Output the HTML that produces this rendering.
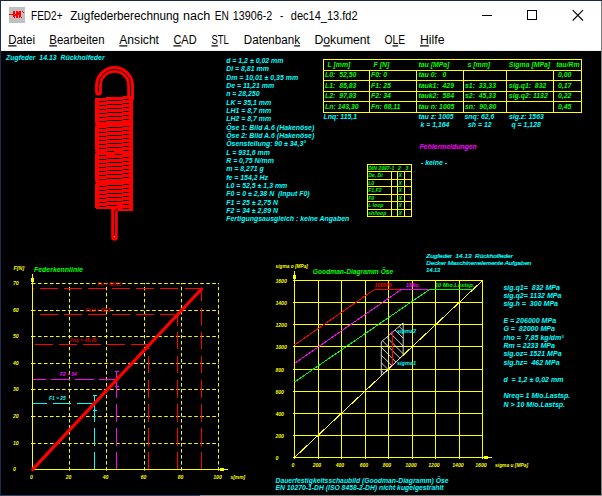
<!DOCTYPE html>
<html lang="de"><head><meta charset="utf-8"><title>FED2+  Zugfederberechnung nach EN 13906-2</title>
<style>
html,body{margin:0;padding:0;background:#000;overflow:hidden}
svg{display:block}
text{font-family:"Liberation Sans",sans-serif;white-space:pre}
.bi{font-weight:bold;font-style:italic}
.ui{font-weight:normal;font-style:normal}
.ri{font-weight:normal;font-style:italic;stroke:#00ffff;stroke-width:.22px}
</style></head><body>
<svg width="602" height="496" viewBox="0 0 602 496">
<rect x="0" y="0" width="602" height="496" fill="#000"/>
<rect x="1" y="1" width="600" height="49" fill="#fff"/>
<rect x="1" y="50" width="600" height="1" fill="#f0f0f0"/>
<rect x="0" y="0" width="602" height="1" fill="#1b2740"/>
<rect x="0" y="0" width="1" height="496" fill="#1c2c52"/>
<rect x="601" y="1" width="1" height="495" fill="#7f7f7f"/>
<rect x="0" y="495" width="200" height="1" fill="#2a4172"/>
<rect x="200" y="495" width="402" height="1" fill="#8c8c8c"/>
<rect x="9" y="7" width="16" height="16" fill="#c0c0c0"/>
<g fill="#ff0000" shape-rendering="crispEdges">
<rect x="9" y="14" width="4" height="1" fill="#ff0000"/>
<rect x="13" y="11" width="1" height="6" fill="#ff0000"/>
<rect x="14" y="11" width="1" height="7" fill="#ff0000"/>
<rect x="15" y="14" width="1" height="2" fill="#ff0000"/>
<rect x="16" y="11" width="2" height="7" fill="#ff0000"/>
<rect x="18" y="12" width="1" height="3" fill="#ff0000"/>
<rect x="19" y="11" width="1" height="7" fill="#ff0000"/>
<rect x="20" y="11" width="1" height="6" fill="#ff0000"/>
<rect x="21" y="17" width="1" height="1" fill="#ff0000"/>
<rect x="22" y="11" width="1" height="1" fill="#ff0000"/>
<rect x="23" y="12" width="1" height="1" fill="#ff0000"/>
</g>
<text class="ui" x="31.1" y="19.5" font-size="12" fill="#000" textLength="31.4" lengthAdjust="spacingAndGlyphs">FED2+</text>
<text class="ui" x="70.2" y="19.5" font-size="12" fill="#000" textLength="108.8" lengthAdjust="spacingAndGlyphs">Zugfederberechnung</text>
<text class="ui" x="183" y="19.5" font-size="12" fill="#000" textLength="27.3" lengthAdjust="spacingAndGlyphs">nach</text>
<text class="ui" x="214.8" y="19.5" font-size="12" fill="#000" textLength="14.1" lengthAdjust="spacingAndGlyphs">EN</text>
<text class="ui" x="232.8" y="19.5" font-size="12" fill="#000" textLength="39.4" lengthAdjust="spacingAndGlyphs">13906-2</text>
<text class="ui" x="280" y="19.5" font-size="12" fill="#000" textLength="3.3" lengthAdjust="spacingAndGlyphs">-</text>
<text class="ui" x="290.8" y="19.5" font-size="12" fill="#000" textLength="66.7" lengthAdjust="spacingAndGlyphs">dec14_13.fd2</text>
<line x1="482" y1="15.5" x2="492" y2="15.5" stroke="#000" stroke-width="1" shape-rendering="crispEdges"/>
<rect x="527.5" y="10.5" width="9" height="9" fill="none" stroke="#000" stroke-width="1" shape-rendering="crispEdges"/>
<path d="M572.7 10.2L583 20.5M583 10.2L572.7 20.5" stroke="#000" stroke-width="1.1" fill="none"/>
<text class="ui" x="8.2" y="44.3" font-size="12" fill="#000" textLength="26.8" lengthAdjust="spacingAndGlyphs"><tspan style="text-decoration:underline;text-underline-offset:1.6px;text-decoration-thickness:1px">D</tspan>atei</text>
<text class="ui" x="49.3" y="44.3" font-size="12" fill="#000" textLength="55.3" lengthAdjust="spacingAndGlyphs"><tspan style="text-decoration:underline;text-underline-offset:1.6px;text-decoration-thickness:1px">B</tspan>earbeiten</text>
<text class="ui" x="119.3" y="44.3" font-size="12" fill="#000" textLength="39.7" lengthAdjust="spacingAndGlyphs"><tspan style="text-decoration:underline;text-underline-offset:1.6px;text-decoration-thickness:1px">A</tspan>nsicht</text>
<text class="ui" x="173.4" y="44.3" font-size="12" fill="#000" textLength="23.2" lengthAdjust="spacingAndGlyphs"><tspan style="text-decoration:underline;text-underline-offset:1.6px;text-decoration-thickness:1px">C</tspan>AD</text>
<text class="ui" x="211.5" y="44.3" font-size="12" fill="#000" textLength="17.4" lengthAdjust="spacingAndGlyphs"><tspan style="text-decoration:underline;text-underline-offset:1.6px;text-decoration-thickness:1px">S</tspan>TL</text>
<text class="ui" x="243.8" y="44.3" font-size="12" fill="#000" textLength="56.2" lengthAdjust="spacingAndGlyphs">Datenban<tspan style="text-decoration:underline;text-underline-offset:1.6px;text-decoration-thickness:1px">k</tspan></text>
<text class="ui" x="314.5" y="44.3" font-size="12" fill="#000" textLength="55.5" lengthAdjust="spacingAndGlyphs">D<tspan style="text-decoration:underline;text-underline-offset:1.6px;text-decoration-thickness:1px">o</tspan>kument</text>
<text class="ui" x="384.5" y="44.3" font-size="12" fill="#000" textLength="20.5" lengthAdjust="spacingAndGlyphs">O<tspan style="text-decoration:underline;text-underline-offset:1.6px;text-decoration-thickness:1px">L</tspan>E</text>
<text class="ui" x="420" y="44.3" font-size="12" fill="#000" textLength="24.5" lengthAdjust="spacingAndGlyphs"><tspan style="text-decoration:underline;text-underline-offset:1.6px;text-decoration-thickness:1px">H</tspan>ilfe</text>
<text class="bi" x="6" y="59.6" font-size="6.4" fill="#00ffff" textLength="98.6" lengthAdjust="spacingAndGlyphs">Zugfeder  14.13  Rückholfeder</text>
<g id="spring">
<path d="M98.5 92.2V85.4A16.05 16.05 0 0 1 130.6 85.4V98" fill="none" stroke="#ff0000" stroke-width="6.8" stroke-linecap="round"/>
<path d="M98.5 92.2V85.4A16.05 16.05 0 0 1 130.6 85.4V96" fill="none" stroke="#000" stroke-width="1" stroke-linecap="butt"/>
<path d="M95 98.2H106V96.7H122.5V96H133.2V210L132 211.3H118V209.3H96.5L95 208Z" fill="#ff0000" shape-rendering="crispEdges"/>
<path d="M114.5 206V237.4" fill="none" stroke="#ff0000" stroke-width="6.6" stroke-linecap="round"/>
<g fill="#000" shape-rendering="crispEdges">
<rect x="99" y="101" width="7" height="1" fill="#000"/>
<rect x="99" y="105" width="7" height="1" fill="#000"/>
<rect x="99" y="109" width="7" height="1" fill="#000"/>
<rect x="99" y="113" width="7" height="1" fill="#000"/>
<rect x="99" y="117" width="7" height="1" fill="#000"/>
<rect x="99" y="121" width="7" height="1" fill="#000"/>
<rect x="99" y="128" width="7" height="1" fill="#000"/>
<rect x="99" y="132" width="7" height="1" fill="#000"/>
<rect x="99" y="136" width="7" height="1" fill="#000"/>
<rect x="99" y="140" width="7" height="1" fill="#000"/>
<rect x="99" y="144" width="7" height="1" fill="#000"/>
<rect x="99" y="148" width="7" height="1" fill="#000"/>
<rect x="99" y="155" width="7" height="1" fill="#000"/>
<rect x="99" y="159" width="7" height="1" fill="#000"/>
<rect x="99" y="163" width="7" height="1" fill="#000"/>
<rect x="99" y="167" width="7" height="1" fill="#000"/>
<rect x="99" y="171" width="7" height="1" fill="#000"/>
<rect x="99" y="175" width="7" height="1" fill="#000"/>
<rect x="99" y="179" width="7" height="1" fill="#000"/>
<rect x="99" y="186" width="7" height="1" fill="#000"/>
<rect x="99" y="190" width="7" height="1" fill="#000"/>
<rect x="99" y="194" width="7" height="1" fill="#000"/>
<rect x="99" y="198" width="7" height="1" fill="#000"/>
<rect x="99" y="202" width="7" height="1" fill="#000"/>
<rect x="99" y="206" width="7" height="1" fill="#000"/>
<rect x="107" y="100" width="15" height="1" fill="#000"/>
<rect x="107" y="104" width="15" height="1" fill="#000"/>
<rect x="107" y="108" width="15" height="1" fill="#000"/>
<rect x="107" y="112" width="15" height="1" fill="#000"/>
<rect x="107" y="116" width="15" height="1" fill="#000"/>
<rect x="107" y="120" width="15" height="1" fill="#000"/>
<rect x="107" y="127" width="15" height="1" fill="#000"/>
<rect x="107" y="131" width="15" height="1" fill="#000"/>
<rect x="107" y="135" width="15" height="1" fill="#000"/>
<rect x="107" y="139" width="15" height="1" fill="#000"/>
<rect x="107" y="143" width="15" height="1" fill="#000"/>
<rect x="107" y="147" width="15" height="1" fill="#000"/>
<rect x="107" y="158" width="15" height="1" fill="#000"/>
<rect x="107" y="162" width="15" height="1" fill="#000"/>
<rect x="107" y="166" width="15" height="1" fill="#000"/>
<rect x="107" y="170" width="15" height="1" fill="#000"/>
<rect x="107" y="174" width="15" height="1" fill="#000"/>
<rect x="107" y="178" width="15" height="1" fill="#000"/>
<rect x="107" y="185" width="15" height="1" fill="#000"/>
<rect x="107" y="189" width="15" height="1" fill="#000"/>
<rect x="107" y="193" width="15" height="1" fill="#000"/>
<rect x="107" y="197" width="15" height="1" fill="#000"/>
<rect x="107" y="201" width="15" height="1" fill="#000"/>
<rect x="107" y="151" width="7" height="1" fill="#000"/>
<rect x="115" y="154" width="7" height="1" fill="#000"/>
<rect x="107" y="205" width="10" height="1" fill="#000"/>
<rect x="123" y="99" width="6" height="1" fill="#000"/>
<rect x="123" y="103" width="6" height="1" fill="#000"/>
<rect x="123" y="107" width="6" height="1" fill="#000"/>
<rect x="123" y="111" width="6" height="1" fill="#000"/>
<rect x="123" y="115" width="6" height="1" fill="#000"/>
<rect x="123" y="119" width="6" height="1" fill="#000"/>
<rect x="123" y="126" width="6" height="1" fill="#000"/>
<rect x="123" y="130" width="6" height="1" fill="#000"/>
<rect x="123" y="134" width="6" height="1" fill="#000"/>
<rect x="123" y="138" width="6" height="1" fill="#000"/>
<rect x="123" y="142" width="6" height="1" fill="#000"/>
<rect x="123" y="146" width="6" height="1" fill="#000"/>
<rect x="123" y="150" width="6" height="1" fill="#000"/>
<rect x="123" y="157" width="6" height="1" fill="#000"/>
<rect x="123" y="161" width="6" height="1" fill="#000"/>
<rect x="123" y="165" width="6" height="1" fill="#000"/>
<rect x="123" y="169" width="6" height="1" fill="#000"/>
<rect x="123" y="173" width="6" height="1" fill="#000"/>
<rect x="123" y="177" width="6" height="1" fill="#000"/>
<rect x="123" y="184" width="6" height="1" fill="#000"/>
<rect x="123" y="188" width="6" height="1" fill="#000"/>
<rect x="123" y="192" width="6" height="1" fill="#000"/>
<rect x="123" y="196" width="6" height="1" fill="#000"/>
<rect x="123" y="200" width="6" height="1" fill="#000"/>
<rect x="123" y="204" width="6" height="1" fill="#000"/>
<rect x="123" y="208" width="6" height="1" fill="#000"/>
<rect x="114" y="211" width="1" height="25" fill="#000"/>
<rect x="94" y="150" width="2" height="1" fill="#000"/>
<rect x="94" y="152" width="2" height="1" fill="#000"/>
<rect x="94" y="123" width="2" height="1" fill="#000"/>
<rect x="94" y="125" width="2" height="1" fill="#000"/>
<rect x="94" y="181" width="2" height="1" fill="#000"/>
<rect x="94" y="183" width="2" height="1" fill="#000"/>
</g>
<path d="M114.5 211.6L117.4 208.8" stroke="#000" stroke-width="1" fill="none"/>
<rect x="114" y="236" width="1" height="1" fill="#ffff00"/>
</g>
<text class="bi" x="226.2" y="62.8" font-size="6.95" fill="#00ffff">d = 1,2 ± 0,02 mm</text>
<text class="bi" x="226.2" y="71.15" font-size="6.95" fill="#00ffff">Di = 8,81 mm</text>
<text class="bi" x="226.2" y="79.5" font-size="6.95" fill="#00ffff">Dm = 10,01 ± 0,35 mm</text>
<text class="bi" x="226.2" y="87.85" font-size="6.95" fill="#00ffff">De = 11,21 mm</text>
<text class="bi" x="226.2" y="96.2" font-size="6.95" fill="#00ffff">n = 28,250</text>
<text class="bi" x="226.2" y="104.55" font-size="6.95" fill="#00ffff">LK = 35,1 mm</text>
<text class="bi" x="226.2" y="112.9" font-size="6.95" fill="#00ffff">LH1 = 8,7 mm</text>
<text class="bi" x="226.2" y="121.25" font-size="6.95" fill="#00ffff">LH2 = 8,7 mm</text>
<text class="bi" x="226.2" y="129.6" font-size="6.95" fill="#00ffff">Öse 1: Bild A.6 (Hakenöse)</text>
<text class="bi" x="226.2" y="137.95" font-size="6.95" fill="#00ffff">Öse 2: Bild A.6 (Hakenöse)</text>
<text class="bi" x="226.2" y="146.3" font-size="6.95" fill="#00ffff">Ösenstellung: 90 ± 34,3°</text>
<text class="bi" x="226.2" y="154.65" font-size="6.95" fill="#00ffff">L = 931,6 mm</text>
<text class="bi" x="226.2" y="163.0" font-size="6.95" fill="#00ffff">R = 0,75 N/mm</text>
<text class="bi" x="226.2" y="171.35" font-size="6.95" fill="#00ffff">m = 8,271 g</text>
<text class="bi" x="226.2" y="179.7" font-size="6.95" fill="#00ffff">fe = 154,2 Hz</text>
<text class="bi" x="226.2" y="188.05" font-size="6.95" fill="#00ffff">L0 = 52,5 ± 1,3 mm</text>
<text class="bi" x="226.2" y="196.4" font-size="6.95" fill="#00ffff">F0 = 0 ± 2,38 N  (Input F0)</text>
<text class="bi" x="226.2" y="204.75" font-size="6.95" fill="#00ffff">F1 = 25 ± 2,75 N</text>
<text class="bi" x="226.2" y="213.1" font-size="6.95" fill="#00ffff">F2 = 34 ± 2,89 N</text>
<text class="bi" x="226.2" y="221.45" font-size="6.95" fill="#00ffff">Fertigungsausgleich : keine Angaben</text>
<line x1="323.0" y1="59.5" x2="582.0" y2="59.5" stroke="#ffff00" stroke-width="1" shape-rendering="crispEdges"/>
<line x1="323.0" y1="70.5" x2="582.0" y2="70.5" stroke="#ffff00" stroke-width="1" shape-rendering="crispEdges"/>
<line x1="323.0" y1="80.5" x2="582.0" y2="80.5" stroke="#ffff00" stroke-width="1" shape-rendering="crispEdges"/>
<line x1="323.0" y1="91.5" x2="582.0" y2="91.5" stroke="#ffff00" stroke-width="1" shape-rendering="crispEdges"/>
<line x1="323.0" y1="101.5" x2="582.0" y2="101.5" stroke="#ffff00" stroke-width="1" shape-rendering="crispEdges"/>
<line x1="323.0" y1="112.5" x2="582.0" y2="112.5" stroke="#ffff00" stroke-width="1" shape-rendering="crispEdges"/>
<line x1="323.5" y1="59.5" x2="323.5" y2="112.5" stroke="#ffff00" stroke-width="1" shape-rendering="crispEdges"/>
<line x1="581.5" y1="59.5" x2="581.5" y2="112.5" stroke="#ffff00" stroke-width="1" shape-rendering="crispEdges"/>
<line x1="369.5" y1="70.5" x2="369.5" y2="112.5" stroke="#ffff00" stroke-width="1" shape-rendering="crispEdges"/>
<line x1="416.5" y1="70.5" x2="416.5" y2="112.5" stroke="#ffff00" stroke-width="1" shape-rendering="crispEdges"/>
<line x1="463.5" y1="70.5" x2="463.5" y2="112.5" stroke="#ffff00" stroke-width="1" shape-rendering="crispEdges"/>
<line x1="506.5" y1="70.5" x2="506.5" y2="112.5" stroke="#ffff00" stroke-width="1" shape-rendering="crispEdges"/>
<line x1="553.5" y1="70.5" x2="553.5" y2="112.5" stroke="#ffff00" stroke-width="1" shape-rendering="crispEdges"/>
<text class="bi" x="327.5" y="66.5" font-size="6.9" fill="#00ff00">L [mm]</text>
<text class="bi" x="373.6" y="66.5" font-size="6.9" fill="#00ff00">F [N]</text>
<text class="bi" x="418.4" y="66.5" font-size="6.9" fill="#00ff00">tau [MPa]</text>
<text class="bi" x="467.5" y="66.5" font-size="6.9" fill="#00ff00">s [mm]</text>
<text class="bi" x="508.8" y="66.5" font-size="6.9" fill="#00ff00">Sigma [MPa]</text>
<text class="bi" x="556.2" y="66.5" font-size="6.9" fill="#00ff00">tau/Rm</text>
<text class="bi" x="325" y="77" font-size="6.9" fill="#00ff00">L0:  52,50</text>
<text class="bi" x="371" y="77" font-size="6.9" fill="#00ff00">F0: 0</text>
<text class="bi" x="418.4" y="77" font-size="6.9" fill="#00ff00">tau 0:   0</text>
<text class="bi" x="558" y="77" font-size="6.9" fill="#00ff00">0,00</text>
<text class="bi" x="325" y="87.5" font-size="6.9" fill="#00ff00">L1:  85,83</text>
<text class="bi" x="371" y="87.5" font-size="6.9" fill="#00ff00">F1: 25</text>
<text class="bi" x="418.4" y="87.5" font-size="6.9" fill="#00ff00">tauk1:  429</text>
<text class="bi" x="465" y="87.5" font-size="6.9" fill="#00ff00">s1:  33,33</text>
<text class="bi" x="508.8" y="87.5" font-size="6.9" fill="#00ff00">sig.q1:  832</text>
<text class="bi" x="558" y="87.5" font-size="6.9" fill="#00ff00">0,17</text>
<text class="bi" x="325" y="98" font-size="6.9" fill="#00ff00">L2:  97,83</text>
<text class="bi" x="371" y="98" font-size="6.9" fill="#00ff00">F2: 34</text>
<text class="bi" x="418.4" y="98" font-size="6.9" fill="#00ff00">tauk2:  584</text>
<text class="bi" x="465" y="98" font-size="6.9" fill="#00ff00">s2:  45,33</text>
<text class="bi" x="508.8" y="98" font-size="6.9" fill="#00ff00">sig.q2: 1132</text>
<text class="bi" x="558" y="98" font-size="6.9" fill="#00ff00">0,22</text>
<text class="bi" x="325" y="108.5" font-size="6.9" fill="#00ff00">Ln: 143,30</text>
<text class="bi" x="371" y="108.5" font-size="6.9" fill="#00ff00">Fn: 68,11</text>
<text class="bi" x="418.4" y="108.5" font-size="6.9" fill="#00ff00">tau n: 1005</text>
<text class="bi" x="465" y="108.5" font-size="6.9" fill="#00ff00">sn:  90,80</text>
<text class="bi" x="558" y="108.5" font-size="6.9" fill="#00ff00">0,45</text>
<text class="bi" x="323.5" y="119.4" font-size="6.9" fill="#00ffff">Lnq: 115,1</text>
<text class="bi" x="418.4" y="119.4" font-size="6.9" fill="#00ffff">tau z: 1005</text>
<text class="bi" x="464.5" y="119.4" font-size="6.9" fill="#00ffff">snq: 62,6</text>
<text class="bi" x="509" y="119.4" font-size="6.9" fill="#00ffff">sig.z: 1563</text>
<text class="bi" x="420.5" y="126.8" font-size="6.9" fill="#00ffff">k = 1,164</text>
<text class="bi" x="468" y="126.8" font-size="6.9" fill="#00ffff">sh = 12</text>
<text class="bi" x="511.5" y="126.8" font-size="6.9" fill="#00ffff">q = 1,128</text>
<text class="bi" x="419.4" y="149.3" font-size="6.9" fill="#ff00ff">Fehlermeldungen</text>
<text class="bi" x="421" y="164.8" font-size="6.9" fill="#00ffff">- keine -</text>
<line x1="367.0" y1="164.5" x2="412.0" y2="164.5" stroke="#ffff00" stroke-width="1" shape-rendering="crispEdges"/>
<line x1="367.0" y1="171.5" x2="412.0" y2="171.5" stroke="#ffff00" stroke-width="1" shape-rendering="crispEdges"/>
<line x1="367.0" y1="179.5" x2="412.0" y2="179.5" stroke="#ffff00" stroke-width="1" shape-rendering="crispEdges"/>
<line x1="367.0" y1="186.5" x2="412.0" y2="186.5" stroke="#ffff00" stroke-width="1" shape-rendering="crispEdges"/>
<line x1="367.0" y1="194.5" x2="412.0" y2="194.5" stroke="#ffff00" stroke-width="1" shape-rendering="crispEdges"/>
<line x1="367.0" y1="201.5" x2="412.0" y2="201.5" stroke="#ffff00" stroke-width="1" shape-rendering="crispEdges"/>
<line x1="367.0" y1="209.5" x2="412.0" y2="209.5" stroke="#ffff00" stroke-width="1" shape-rendering="crispEdges"/>
<line x1="367.0" y1="216.5" x2="412.0" y2="216.5" stroke="#ffff00" stroke-width="1" shape-rendering="crispEdges"/>
<line x1="367.5" y1="164.5" x2="367.5" y2="216.5" stroke="#ffff00" stroke-width="1" shape-rendering="crispEdges"/>
<line x1="411.5" y1="164.5" x2="411.5" y2="216.5" stroke="#ffff00" stroke-width="1" shape-rendering="crispEdges"/>
<line x1="391.5" y1="171.5" x2="391.5" y2="216.5" stroke="#ffff00" stroke-width="1" shape-rendering="crispEdges"/>
<line x1="397.5" y1="171.5" x2="397.5" y2="216.5" stroke="#ffff00" stroke-width="1" shape-rendering="crispEdges"/>
<line x1="404.5" y1="171.5" x2="404.5" y2="216.5" stroke="#ffff00" stroke-width="1" shape-rendering="crispEdges"/>
<text class="bi" x="368.2" y="170" font-size="5.1" fill="#00ff00">DIN 2097-1</text>
<text class="bi" x="398.1" y="170" font-size="5.1" fill="#00ff00">2</text>
<text class="bi" x="405.6" y="170" font-size="5.1" fill="#00ff00">3</text>
<text class="bi" x="368.2" y="177.1" font-size="5.1" fill="#00ff00">De, Di</text>
<text class="bi" x="398.6" y="177.1" font-size="5.1" fill="#00ff00">X</text>
<text class="bi" x="368.2" y="185.1" font-size="5.1" fill="#00ff00">L0</text>
<text class="bi" x="398.6" y="185.1" font-size="5.1" fill="#00ff00">X</text>
<text class="bi" x="368.2" y="192.1" font-size="5.1" fill="#00ff00">F1,F2</text>
<text class="bi" x="398.6" y="192.1" font-size="5.1" fill="#00ff00">X</text>
<text class="bi" x="368.2" y="200.1" font-size="5.1" fill="#00ff00">F0</text>
<text class="bi" x="398.6" y="200.1" font-size="5.1" fill="#00ff00">X</text>
<text class="bi" x="368.2" y="207.1" font-size="5.1" fill="#00ff00">L loop</text>
<text class="bi" x="398.6" y="207.1" font-size="5.1" fill="#00ff00">X</text>
<text class="bi" x="368.2" y="215.1" font-size="5.1" fill="#00ff00">sh/loop</text>
<text class="bi" x="398.6" y="215.1" font-size="5.1" fill="#00ff00">X</text>
<text class="bi" x="13.6" y="270.3" font-size="5.3" fill="#ffff00">F[N]</text>
<text class="bi" x="34" y="272.1" font-size="6.94" fill="#00ff00">Federkennlinie</text>
<line x1="32" y1="443.5" x2="219" y2="443.5" stroke="#ffff00" stroke-width="1" stroke-dasharray="3.55 2.46" stroke-dashoffset="0"/>
<rect x="31" y="443.0" width="1" height="1" fill="#ffff00"/>
<line x1="32" y1="416.5" x2="219" y2="416.5" stroke="#ffff00" stroke-width="1" stroke-dasharray="3.55 2.46" stroke-dashoffset="0"/>
<rect x="31" y="416.0" width="1" height="1" fill="#ffff00"/>
<line x1="32" y1="389.5" x2="219" y2="389.5" stroke="#ffff00" stroke-width="1" stroke-dasharray="3.55 2.46" stroke-dashoffset="0"/>
<rect x="31" y="389.0" width="1" height="1" fill="#ffff00"/>
<line x1="32" y1="363.5" x2="219" y2="363.5" stroke="#ffff00" stroke-width="1" stroke-dasharray="3.55 2.46" stroke-dashoffset="0"/>
<rect x="31" y="363.0" width="1" height="1" fill="#ffff00"/>
<line x1="32" y1="336.5" x2="219" y2="336.5" stroke="#ffff00" stroke-width="1" stroke-dasharray="3.55 2.46" stroke-dashoffset="0"/>
<rect x="31" y="336.0" width="1" height="1" fill="#ffff00"/>
<line x1="32" y1="310.5" x2="219" y2="310.5" stroke="#ffff00" stroke-width="1" stroke-dasharray="3.55 2.46" stroke-dashoffset="0"/>
<rect x="31" y="310.0" width="1" height="1" fill="#ffff00"/>
<line x1="32" y1="283.5" x2="219" y2="283.5" stroke="#ffff00" stroke-width="1" stroke-dasharray="3.55 2.46" stroke-dashoffset="0"/>
<rect x="31" y="283.0" width="1" height="1" fill="#ffff00"/>
<line x1="69.5" y1="283" x2="69.5" y2="470.7" stroke="#ffff00" stroke-width="1" stroke-dasharray="3.55 2.46" stroke-dashoffset="2.21"/>
<line x1="106.5" y1="283" x2="106.5" y2="470.7" stroke="#ffff00" stroke-width="1" stroke-dasharray="3.55 2.46" stroke-dashoffset="2.21"/>
<line x1="144.5" y1="283" x2="144.5" y2="470.7" stroke="#ffff00" stroke-width="1" stroke-dasharray="3.55 2.46" stroke-dashoffset="2.21"/>
<line x1="181.5" y1="283" x2="181.5" y2="470.7" stroke="#ffff00" stroke-width="1" stroke-dasharray="3.55 2.46" stroke-dashoffset="2.21"/>
<line x1="218.5" y1="283" x2="218.5" y2="470.7" stroke="#ffff00" stroke-width="1" stroke-dasharray="3.55 2.46" stroke-dashoffset="2.21"/>
<line x1="32.5" y1="274" x2="32.5" y2="470" stroke="#ffff00" stroke-width="1" shape-rendering="crispEdges"/>
<line x1="32" y1="469.5" x2="228" y2="469.5" stroke="#ffff00" stroke-width="1" shape-rendering="crispEdges"/>
<rect x="31" y="278" width="3" height="4" fill="#ffff00"/>
<rect x="220" y="468" width="4" height="3" fill="#ffff00"/>
<text class="bi" x="12.9" y="470.8" font-size="5.1" fill="#ffff00">0</text>
<text class="bi" x="12.9" y="444.8" font-size="5.1" fill="#ffff00">10</text>
<text class="bi" x="12.9" y="417.8" font-size="5.1" fill="#ffff00">20</text>
<text class="bi" x="12.9" y="390.8" font-size="5.1" fill="#ffff00">30</text>
<text class="bi" x="12.9" y="364.8" font-size="5.1" fill="#ffff00">40</text>
<text class="bi" x="12.9" y="337.8" font-size="5.1" fill="#ffff00">50</text>
<text class="bi" x="12.9" y="311.8" font-size="5.1" fill="#ffff00">60</text>
<text class="bi" x="12.9" y="284.8" font-size="5.1" fill="#ffff00">70</text>
<text class="bi" x="31.5" y="479.3" font-size="5.1" fill="#ffff00" text-anchor="middle">0</text>
<text class="bi" x="68.5" y="479.3" font-size="5.1" fill="#ffff00" text-anchor="middle">20</text>
<text class="bi" x="105.5" y="479.3" font-size="5.1" fill="#ffff00" text-anchor="middle">40</text>
<text class="bi" x="143.5" y="479.3" font-size="5.1" fill="#ffff00" text-anchor="middle">60</text>
<text class="bi" x="180.5" y="479.3" font-size="5.1" fill="#ffff00" text-anchor="middle">80</text>
<text class="bi" x="217.5" y="479.3" font-size="5.1" fill="#ffff00" text-anchor="middle">100</text>
<text class="bi" x="230.5" y="479.3" font-size="4.9" fill="#ffff00">s[mm]</text>
<line x1="33" y1="288.5" x2="33.6" y2="288.5" stroke="#ff0000" stroke-width="1" shape-rendering="crispEdges"/>
<line x1="39.7" y1="288.5" x2="57.7" y2="288.5" stroke="#ff0000" stroke-width="1" shape-rendering="crispEdges"/>
<line x1="63.9" y1="288.5" x2="81.9" y2="288.5" stroke="#ff0000" stroke-width="1" shape-rendering="crispEdges"/>
<line x1="88.0" y1="288.5" x2="106.0" y2="288.5" stroke="#ff0000" stroke-width="1" shape-rendering="crispEdges"/>
<line x1="112.1" y1="288.5" x2="130.1" y2="288.5" stroke="#ff0000" stroke-width="1" shape-rendering="crispEdges"/>
<line x1="136.2" y1="288.5" x2="154.2" y2="288.5" stroke="#ff0000" stroke-width="1" shape-rendering="crispEdges"/>
<line x1="160.4" y1="288.5" x2="178.4" y2="288.5" stroke="#ff0000" stroke-width="1" shape-rendering="crispEdges"/>
<line x1="184.5" y1="288.5" x2="201.5" y2="288.5" stroke="#ff0000" stroke-width="1" shape-rendering="crispEdges"/>
<line x1="33" y1="314.5" x2="33.6" y2="314.5" stroke="#ff0000" stroke-width="1" shape-rendering="crispEdges"/>
<line x1="39.7" y1="314.5" x2="57.7" y2="314.5" stroke="#ff0000" stroke-width="1" shape-rendering="crispEdges"/>
<line x1="63.9" y1="314.5" x2="81.9" y2="314.5" stroke="#ff0000" stroke-width="1" shape-rendering="crispEdges"/>
<line x1="88.0" y1="314.5" x2="106.0" y2="314.5" stroke="#ff0000" stroke-width="1" shape-rendering="crispEdges"/>
<line x1="112.1" y1="314.5" x2="130.1" y2="314.5" stroke="#ff0000" stroke-width="1" shape-rendering="crispEdges"/>
<line x1="136.2" y1="314.5" x2="154.2" y2="314.5" stroke="#ff0000" stroke-width="1" shape-rendering="crispEdges"/>
<line x1="160.4" y1="314.5" x2="175" y2="314.5" stroke="#ff0000" stroke-width="1" shape-rendering="crispEdges"/>
<line x1="34.6" y1="344.5" x2="52.6" y2="344.5" stroke="#ff0000" stroke-width="1" shape-rendering="crispEdges"/>
<line x1="58.8" y1="344.5" x2="76.8" y2="344.5" stroke="#ff0000" stroke-width="1" shape-rendering="crispEdges"/>
<line x1="82.9" y1="344.5" x2="100.9" y2="344.5" stroke="#ff0000" stroke-width="1" shape-rendering="crispEdges"/>
<line x1="107.0" y1="344.5" x2="125.0" y2="344.5" stroke="#ff0000" stroke-width="1" shape-rendering="crispEdges"/>
<line x1="131.1" y1="344.5" x2="149" y2="344.5" stroke="#ff0000" stroke-width="1" shape-rendering="crispEdges"/>
<line x1="201.5" y1="289" x2="201.5" y2="301.3" stroke="#ff0000" stroke-width="1" shape-rendering="crispEdges"/>
<line x1="201.5" y1="308.3" x2="201.5" y2="325.7" stroke="#ff0000" stroke-width="1" shape-rendering="crispEdges"/>
<line x1="201.5" y1="331.9" x2="201.5" y2="349.3" stroke="#ff0000" stroke-width="1" shape-rendering="crispEdges"/>
<line x1="201.5" y1="355.5" x2="201.5" y2="373" stroke="#ff0000" stroke-width="1" shape-rendering="crispEdges"/>
<line x1="201.5" y1="380" x2="201.5" y2="397.8" stroke="#ff0000" stroke-width="1" shape-rendering="crispEdges"/>
<line x1="201.5" y1="404" x2="201.5" y2="421.5" stroke="#ff0000" stroke-width="1" shape-rendering="crispEdges"/>
<line x1="201.5" y1="428" x2="201.5" y2="445.7" stroke="#ff0000" stroke-width="1" shape-rendering="crispEdges"/>
<line x1="201.5" y1="452.2" x2="201.5" y2="469" stroke="#ff0000" stroke-width="1" shape-rendering="crispEdges"/>
<line x1="177.5" y1="315" x2="177.5" y2="325.7" stroke="#ff0000" stroke-width="1" shape-rendering="crispEdges"/>
<line x1="177.5" y1="331.9" x2="177.5" y2="349.3" stroke="#ff0000" stroke-width="1" shape-rendering="crispEdges"/>
<line x1="177.5" y1="355.5" x2="177.5" y2="373" stroke="#ff0000" stroke-width="1" shape-rendering="crispEdges"/>
<line x1="177.5" y1="380" x2="177.5" y2="397.8" stroke="#ff0000" stroke-width="1" shape-rendering="crispEdges"/>
<line x1="177.5" y1="404" x2="177.5" y2="421.5" stroke="#ff0000" stroke-width="1" shape-rendering="crispEdges"/>
<line x1="177.5" y1="428" x2="177.5" y2="445.7" stroke="#ff0000" stroke-width="1" shape-rendering="crispEdges"/>
<line x1="177.5" y1="452.2" x2="177.5" y2="469" stroke="#ff0000" stroke-width="1" shape-rendering="crispEdges"/>
<line x1="148.5" y1="345" x2="148.5" y2="349.3" stroke="#ff0000" stroke-width="1" shape-rendering="crispEdges"/>
<line x1="148.5" y1="355.5" x2="148.5" y2="373" stroke="#ff0000" stroke-width="1" shape-rendering="crispEdges"/>
<line x1="148.5" y1="380" x2="148.5" y2="397.8" stroke="#ff0000" stroke-width="1" shape-rendering="crispEdges"/>
<line x1="148.5" y1="404" x2="148.5" y2="421.5" stroke="#ff0000" stroke-width="1" shape-rendering="crispEdges"/>
<line x1="148.5" y1="428" x2="148.5" y2="445.7" stroke="#ff0000" stroke-width="1" shape-rendering="crispEdges"/>
<line x1="148.5" y1="452.2" x2="148.5" y2="469" stroke="#ff0000" stroke-width="1" shape-rendering="crispEdges"/>
<line x1="33" y1="379.5" x2="46.3" y2="379.5" stroke="#ff00ff" stroke-width="1" shape-rendering="crispEdges"/>
<line x1="51" y1="379.5" x2="70.3" y2="379.5" stroke="#ff00ff" stroke-width="1" shape-rendering="crispEdges"/>
<line x1="75" y1="379.5" x2="94.3" y2="379.5" stroke="#ff00ff" stroke-width="1" shape-rendering="crispEdges"/>
<line x1="99" y1="379.5" x2="116.5" y2="379.5" stroke="#ff00ff" stroke-width="1" shape-rendering="crispEdges"/>
<line x1="116.5" y1="371.5" x2="116.5" y2="386.5" stroke="#ff00ff" stroke-width="1" shape-rendering="crispEdges"/>
<line x1="114.5" y1="371.5" x2="118.5" y2="371.5" stroke="#ff00ff" stroke-width="1" shape-rendering="crispEdges"/>
<line x1="114.5" y1="386.5" x2="118.5" y2="386.5" stroke="#ff00ff" stroke-width="1" shape-rendering="crispEdges"/>
<line x1="116.5" y1="380" x2="116.5" y2="397.8" stroke="#ff00ff" stroke-width="1" shape-rendering="crispEdges"/>
<line x1="116.5" y1="404" x2="116.5" y2="421.5" stroke="#ff00ff" stroke-width="1" shape-rendering="crispEdges"/>
<line x1="116.5" y1="428" x2="116.5" y2="445.7" stroke="#ff00ff" stroke-width="1" shape-rendering="crispEdges"/>
<line x1="116.5" y1="452.2" x2="116.5" y2="469" stroke="#ff00ff" stroke-width="1" shape-rendering="crispEdges"/>
<line x1="33" y1="403.5" x2="46.8" y2="403.5" stroke="#00ffff" stroke-width="1" shape-rendering="crispEdges"/>
<line x1="53.0" y1="403.5" x2="71.0" y2="403.5" stroke="#00ffff" stroke-width="1" shape-rendering="crispEdges"/>
<line x1="77.2" y1="403.5" x2="94.5" y2="403.5" stroke="#00ffff" stroke-width="1" shape-rendering="crispEdges"/>
<line x1="94.5" y1="395.5" x2="94.5" y2="410.5" stroke="#00ffff" stroke-width="1" shape-rendering="crispEdges"/>
<line x1="92.5" y1="395.5" x2="96.5" y2="395.5" stroke="#00ffff" stroke-width="1" shape-rendering="crispEdges"/>
<line x1="92.5" y1="410.5" x2="96.5" y2="410.5" stroke="#00ffff" stroke-width="1" shape-rendering="crispEdges"/>
<line x1="94.5" y1="404" x2="94.5" y2="421.5" stroke="#00ffff" stroke-width="1" shape-rendering="crispEdges"/>
<line x1="94.5" y1="428" x2="94.5" y2="445.7" stroke="#00ffff" stroke-width="1" shape-rendering="crispEdges"/>
<line x1="94.5" y1="452.2" x2="94.5" y2="469" stroke="#00ffff" stroke-width="1" shape-rendering="crispEdges"/>
<text class="bi" x="97.5" y="285.9" font-size="4.9" fill="#d00000">Fn = 68,11</text>
<text class="bi" x="85.7" y="311.6" font-size="4.9" fill="#d00000">Fzul = 59,5</text>
<text class="bi" x="69.8" y="342.3" font-size="4.9" fill="#d00000">Fnq = 45,95</text>
<text class="bi" x="60.1" y="376" font-size="4.9" fill="#ff00ff">F2 = 34</text>
<text class="bi" x="49.1" y="400.2" font-size="4.9" fill="#00ffff">F1 = 25</text>
<line x1="32.7" y1="469.3" x2="201.5" y2="289" stroke="#ff0000" stroke-width="3.2" stroke-linecap="round"/>
<text class="bi" x="275.6" y="268" font-size="4.9" fill="#ffff00" textLength="32.3" lengthAdjust="spacingAndGlyphs">sigma o [MPa]</text>
<text class="bi" x="312.8" y="274.1" font-size="6.68" fill="#00ff00">Goodman-Diagramm Öse</text>
<line x1="293" y1="457.5" x2="483" y2="457.5" stroke="#ffff00" stroke-width="1" shape-rendering="crispEdges"/>
<line x1="293" y1="435.5" x2="483" y2="435.5" stroke="#ffff00" stroke-width="1" shape-rendering="crispEdges"/>
<line x1="293" y1="413.5" x2="483" y2="413.5" stroke="#ffff00" stroke-width="1" shape-rendering="crispEdges"/>
<line x1="293" y1="391.5" x2="483" y2="391.5" stroke="#ffff00" stroke-width="1" shape-rendering="crispEdges"/>
<line x1="293" y1="369.5" x2="483" y2="369.5" stroke="#ffff00" stroke-width="1" shape-rendering="crispEdges"/>
<line x1="293" y1="346.5" x2="483" y2="346.5" stroke="#ffff00" stroke-width="1" shape-rendering="crispEdges"/>
<line x1="293" y1="324.5" x2="483" y2="324.5" stroke="#ffff00" stroke-width="1" shape-rendering="crispEdges"/>
<line x1="293" y1="302.5" x2="483" y2="302.5" stroke="#ffff00" stroke-width="1" shape-rendering="crispEdges"/>
<line x1="293" y1="280.5" x2="483" y2="280.5" stroke="#ffff00" stroke-width="1" shape-rendering="crispEdges"/>
<line x1="294.5" y1="280" x2="294.5" y2="459" stroke="#ffff00" stroke-width="1" shape-rendering="crispEdges"/>
<line x1="318.5" y1="280" x2="318.5" y2="459" stroke="#ffff00" stroke-width="1" shape-rendering="crispEdges"/>
<line x1="341.5" y1="280" x2="341.5" y2="459" stroke="#ffff00" stroke-width="1" shape-rendering="crispEdges"/>
<line x1="365.5" y1="280" x2="365.5" y2="459" stroke="#ffff00" stroke-width="1" shape-rendering="crispEdges"/>
<line x1="388.5" y1="280" x2="388.5" y2="459" stroke="#ffff00" stroke-width="1" shape-rendering="crispEdges"/>
<line x1="412.5" y1="280" x2="412.5" y2="459" stroke="#ffff00" stroke-width="1" shape-rendering="crispEdges"/>
<line x1="435.5" y1="280" x2="435.5" y2="459" stroke="#ffff00" stroke-width="1" shape-rendering="crispEdges"/>
<line x1="459.5" y1="280" x2="459.5" y2="459" stroke="#ffff00" stroke-width="1" shape-rendering="crispEdges"/>
<line x1="482.5" y1="280" x2="482.5" y2="459" stroke="#ffff00" stroke-width="1" shape-rendering="crispEdges"/>
<line x1="294.5" y1="271" x2="294.5" y2="458" stroke="#ffff00" stroke-width="1" shape-rendering="crispEdges"/>
<line x1="294" y1="457.5" x2="491.5" y2="457.5" stroke="#ffff00" stroke-width="1" shape-rendering="crispEdges"/>
<rect x="293" y="275" width="3" height="4" fill="#ffff00"/>
<rect x="484" y="456" width="4" height="3" fill="#ffff00"/>
<text class="bi" x="275.4" y="459.6" font-size="5.1" fill="#ffff00">0</text>
<text class="bi" x="275.4" y="437.6" font-size="5.1" fill="#ffff00">200</text>
<text class="bi" x="275.4" y="415.6" font-size="5.1" fill="#ffff00">400</text>
<text class="bi" x="275.4" y="393.6" font-size="5.1" fill="#ffff00">600</text>
<text class="bi" x="275.4" y="371.6" font-size="5.1" fill="#ffff00">800</text>
<text class="bi" x="275.4" y="348.6" font-size="5.1" fill="#ffff00">1000</text>
<text class="bi" x="275.4" y="326.6" font-size="5.1" fill="#ffff00">1200</text>
<text class="bi" x="275.4" y="304.6" font-size="5.1" fill="#ffff00">1400</text>
<text class="bi" x="275.4" y="282.6" font-size="5.1" fill="#ffff00">1600</text>
<text class="bi" x="292.9" y="466.8" font-size="5.1" fill="#ffff00" text-anchor="middle">0</text>
<text class="bi" x="316.9" y="466.8" font-size="5.1" fill="#ffff00" text-anchor="middle">200</text>
<text class="bi" x="339.9" y="466.8" font-size="5.1" fill="#ffff00" text-anchor="middle">400</text>
<text class="bi" x="363.9" y="466.8" font-size="5.1" fill="#ffff00" text-anchor="middle">600</text>
<text class="bi" x="386.9" y="466.8" font-size="5.1" fill="#ffff00" text-anchor="middle">800</text>
<text class="bi" x="410.9" y="466.8" font-size="5.1" fill="#ffff00" text-anchor="middle">1000</text>
<text class="bi" x="433.9" y="466.8" font-size="5.1" fill="#ffff00" text-anchor="middle">1200</text>
<text class="bi" x="457.9" y="466.8" font-size="5.1" fill="#ffff00" text-anchor="middle">1400</text>
<text class="bi" x="480.9" y="466.8" font-size="5.1" fill="#ffff00" text-anchor="middle">1600</text>
<text class="bi" x="495.1" y="466.8" font-size="4.87" fill="#ffff00">sigma u [MPa]</text>
<line x1="294.5" y1="457.5" x2="482.5" y2="280.5" stroke="#ffff00" stroke-width="1" shape-rendering="crispEdges"/>
<polyline points="294.5,345 374.4,289.5 401.2,289.5" fill="none" stroke="#ff0000" stroke-width="1" shape-rendering="crispEdges"/>
<polyline points="294.5,363.4 401.2,289.5 429.5,289.5" fill="none" stroke="#ff00ff" stroke-width="1" shape-rendering="crispEdges"/>
<polyline points="294.5,382.1 429.5,289.5 473,289.5" fill="none" stroke="#00ff00" stroke-width="1" shape-rendering="crispEdges"/>
<text class="bi" x="374.4" y="286.8" font-size="5.2" fill="#ff0000">100000</text>
<text class="bi" x="405.8" y="286.9" font-size="5.6" fill="#ff00ff">1Mio.</text>
<text class="bi" x="434.9" y="286.9" font-size="5.73" fill="#00ff00">10 Mio.Lastsp.</text>
<path d="M381.3 341.9L403.2 322.9V355.2L381.3 375.8Z M399.1 326.4L403.2 330.5 M395.0 330.0L403.2 338.2 M390.8 333.6L403.2 346.0 M386.7 337.2L403.2 353.8 M382.5 340.8L399.9 358.2 M381.3 347.4L395.9 362.0 M381.3 355.1L391.9 365.7 M381.3 362.9L388.0 369.5 M381.3 370.6L384.0 373.3" fill="none" stroke="#e4e4e4" stroke-width="0.9"/>
<line x1="392.4" y1="332.6" x2="392.4" y2="364.4" stroke="#ff0000" stroke-width="1.2"/>
<rect x="391.2" y="331.6" width="1.6" height="1.6" fill="#ff00ff"/>
<rect x="391.2" y="363.8" width="1.6" height="1.6" fill="#ff00ff"/>
<text class="bi" x="396.9" y="332.6" font-size="5.54" fill="#00ffff">sigma2</text>
<text class="bi" x="396.9" y="365.4" font-size="5.54" fill="#00ffff">sigma1</text>
<text class="ri" x="426.3" y="258" font-size="5.7" fill="#00ffff" textLength="86.5" lengthAdjust="spacingAndGlyphs">Zugfeder  14.13  Rückholfeder</text>
<text class="ri" x="426.3" y="265.2" font-size="5.7" fill="#00ffff" textLength="105" lengthAdjust="spacingAndGlyphs">Decker Maschinenelemente Aufgaben</text>
<text class="ri" x="426.3" y="272.2" font-size="5.7" fill="#00ffff" textLength="13.9" lengthAdjust="spacingAndGlyphs">14.13</text>
<text class="bi" x="503.4" y="289.6" font-size="7.05" fill="#00ffff">sig.q1=  832 MPa</text>
<text class="bi" x="503.4" y="298.0" font-size="7.05" fill="#00ffff">sig.q2= 1132 MPa</text>
<text class="bi" x="503.4" y="306.3" font-size="7.05" fill="#00ffff">sig.h =  300 MPa</text>
<text class="bi" x="503.4" y="323.0" font-size="7.05" fill="#00ffff">E = 206000 MPa</text>
<text class="bi" x="503.4" y="331.4" font-size="7.05" fill="#00ffff">G =  82000 MPa</text>
<text class="bi" x="503.4" y="339.7" font-size="7.05" fill="#00ffff">rho =  7,85 kg/dm³</text>
<text class="bi" x="503.4" y="348.1" font-size="7.05" fill="#00ffff">Rm = 2233 MPa</text>
<text class="bi" x="503.4" y="356.4" font-size="7.05" fill="#00ffff">sig.oz= 1521 MPa</text>
<text class="bi" x="503.4" y="364.8" font-size="7.05" fill="#00ffff">sig.hz=  462 MPa</text>
<text class="bi" x="503.4" y="381.5" font-size="7.05" fill="#00ffff">d  = 1,2 ± 0,02 mm</text>
<text class="bi" x="503.4" y="398.2" font-size="7.05" fill="#00ffff">Nreq= 1 Mio.Lastsp.</text>
<text class="bi" x="503.4" y="406.5" font-size="7.05" fill="#00ffff">N &gt; 10 Mio.Lastsp.</text>
<text class="bi" x="275.5" y="482.7" font-size="6.8" fill="#00ffff">Dauerfestigkeitsschaubild (Goodman-Diagramm) Öse</text>
<text class="bi" x="275.5" y="489.6" font-size="6.8" fill="#00ffff">EN 10270-1-DH (ISO 8458-2-DH) nicht kugelgestrahlt</text>
</svg></body></html>
